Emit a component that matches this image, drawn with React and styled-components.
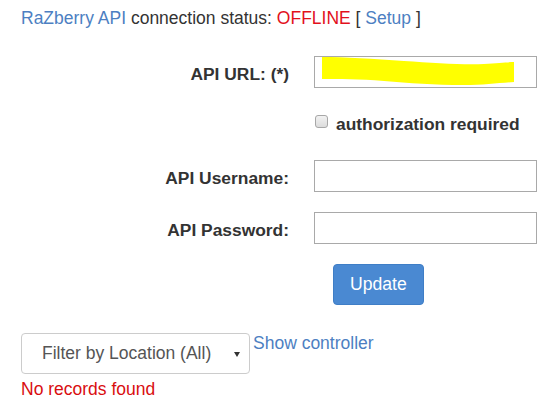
import React from 'react';
import styled, { createGlobalStyle } from 'styled-components';

const GlobalStyle = createGlobalStyle`
    body {
        margin: 0;
        background: #fff;
        font-family: "Liberation Sans", Arial, sans-serif;
        color: #333;
    }
`;

const Page = styled.div`
    padding: 6px 0 0 21px;
    font-size: 17.5px;
    line-height: 25px;
`;

const StatusLine = styled.div`
    white-space: nowrap;
`;

const Link = styled.a`
    color: #4d7fc2;
    text-decoration: none;
    line-height: ${props => props.compact ? '20px' : 'inherit'};
`;

const Offline = styled.span`
    color: #e2101c;
`;

const Form = styled.div`
    display: grid;
    grid-template-columns: 268px 223px;
    column-gap: 25px;
    row-gap: 20px;
    margin-top: 25px;
`;

const Label = styled.label`
    font-weight: bold;
    font-size: 17.4px;
    text-align: right;
    padding-top: 6px;
    white-space: nowrap;
`;

const FieldWrap = styled.div`
    position: relative;
    height: 32px;
`;

const TextInput = styled.input`
    box-sizing: border-box;
    width: 100%;
    height: 32px;
    border: 1px solid #a9a9a9;
    border-radius: 0;
    padding: 4px 6px;
    font: inherit;
    background: #fff;
`;

const Scribble = styled.svg`
    position: absolute;
    inset: 0;
    pointer-events: none;
`;

const CheckRow = styled.label`
    grid-column: 2;
    display: flex;
    align-items: center;
    gap: 8px;
    min-height: 32px;
    height: 25px;
    align-self: start;
    font-weight: bold;
    font-size: 17.4px;
    white-space: nowrap;
`;

const Check = styled.input`
    appearance: none;
    box-sizing: border-box;
    width: 13px;
    height: 13px;
    margin: 7px 0 0 1px;
    border: 1px solid #a7a7a7;
    border-radius: 3px;
    background: linear-gradient(#f2f2f2, #dcdcdc);
    align-self: flex-start;
`;

const ButtonCell = styled.div`
    grid-column: 2;
`;

const Button = styled.button`
    margin-left: 19px;
    height: 41px;
    padding: 0 16px;
    border: 1px solid #3f7ec6;
    border-radius: 4px;
    background: #4a89d2;
    color: #fff;
    font: inherit;
    font-size: 17.6px;
`;

const Toolbar = styled.div`
    display: flex;
    align-items: flex-start;
    gap: 3px;
    margin-top: 28px;
`;

const SelectWrap = styled.div`
    position: relative;
    width: 229px;

    &::after {
        content: '';
        position: absolute;
        right: 10px;
        top: 19px;
        border-left: 3.5px solid transparent;
        border-right: 3.5px solid transparent;
        border-top: 5px solid #333;
        pointer-events: none;
    }
`;

const Select = styled.select`
    appearance: none;
    box-sizing: border-box;
    width: 100%;
    height: 41px;
    padding: 0 20px;
    border: 1px solid #ccc;
    border-radius: 4px;
    background: #fff;
    color: #555;
    font: inherit;
`;

const Empty = styled.div`
    color: #d90d10;
    margin-top: 3px;
`;

const App = () => (
    <>
        <GlobalStyle />
        <Page>
            <StatusLine>
                <Link href="#">RaZberry API</Link> connection status: <Offline>OFFLINE</Offline> [ <Link href="#">Setup</Link> ]
            </StatusLine>

            <Form>
                <Label>API URL: (*)</Label>
                <FieldWrap>
                    <TextInput type="text" />
                    <Scribble width="223" height="32" viewBox="0 0 223 32">
                        <path
                            d="M8 1 C30 1 60 3 90 5 C120 7 150 9 170 8 C185 7 195 6 200 6 L200 26 C185 27 170 29 150 29 C120 29 95 27 70 25 C45 23 25 23 8 23 Z"
                            fill="#ffff00"
                        />
                    </Scribble>
                </FieldWrap>

                <CheckRow>
                    <Check type="checkbox" />
                    authorization required
                </CheckRow>

                <Label>API Username:</Label>
                <FieldWrap>
                    <TextInput type="text" />
                </FieldWrap>

                <Label>API Password:</Label>
                <FieldWrap>
                    <TextInput type="password" />
                </FieldWrap>

                <ButtonCell>
                    <Button>Update</Button>
                </ButtonCell>
            </Form>

            <Toolbar>
                <SelectWrap>
                    <Select defaultValue="all">
                        <option value="all">Filter by Location (All)</option>
                    </Select>
                </SelectWrap>
                <Link href="#" compact>Show controller</Link>
            </Toolbar>

            <Empty>No records found</Empty>
        </Page>
    </>
);

export default App;
